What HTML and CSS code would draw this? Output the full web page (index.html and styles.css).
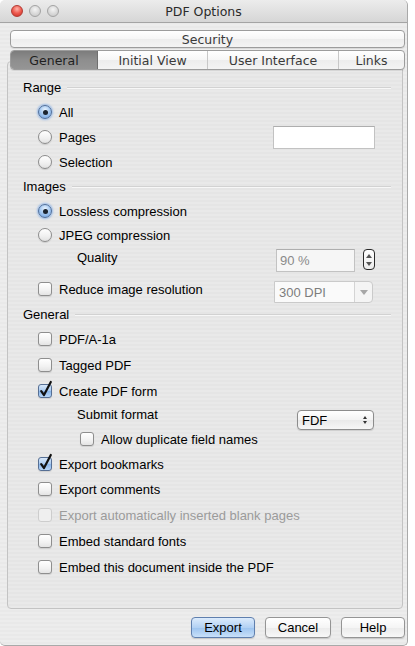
FILE: index.html
```html
<!DOCTYPE html>
<html>
<head>
<meta charset="utf-8">
<title>PDF Options</title>
<link rel="stylesheet" href="styles.css">
</head>
<body>
<div class="window">
  <div class="titlebar">
    <div class="lights"><span class="light red"></span><span class="light"></span><span class="light"></span></div>
    <div class="title">PDF Options</div>
    <div></div>
  </div>
  <div class="tabs">
    <div class="seg seg-single">Security</div>
    <div class="seg seg-multi">
      <span class="tab active w1">General</span>
      <span class="tab w2">Initial View</span>
      <span class="tab w3 div">User Interface</span>
      <span class="tab w4 div">Links</span>
    </div>
  </div>
  <div class="panel">
    <div class="row section h24"><span>Range</span><i class="rule"></i></div>
    <div class="row opt h26"><span class="radio on"></span><span class="lbl">All</span></div>
    <div class="row opt h24"><span class="radio"></span><span class="lbl">Pages</span><span class="field pages"></span></div>
    <div class="row opt h26"><span class="radio"></span><span class="lbl">Selection</span></div>
    <div class="row section h22"><span>Images</span><i class="rule"></i></div>
    <div class="row opt h28"><span class="radio on"></span><span class="lbl">Lossless compression</span></div>
    <div class="row opt h20"><span class="radio"></span><span class="lbl">JPEG compression</span></div>
    <div class="row sub h24"><span class="lbl">Quality</span><span class="field quality">90 %</span><span class="stepper"><i class="up"></i><i class="down"></i></span></div>
    <div class="row opt h24 gap8"><span class="check"></span><span class="lbl">Reduce image resolution</span><span class="dropdown"><span class="dd-text">300 DPI</span><span class="dd-arrow"></span></span></div>
    <div class="row section h26"><span>General</span><i class="rule"></i></div>
    <div class="row opt h24"><span class="check"></span><span class="lbl">PDF/A-1a</span></div>
    <div class="row opt h28"><span class="check"></span><span class="lbl">Tagged PDF</span></div>
    <div class="row opt h24"><span class="check on"><svg viewBox="0 0 14 14" width="14" height="14"><path d="M3.2 7.2 L6 11 L12.8 -2" fill="none" stroke="#111" stroke-width="2.2" stroke-linecap="round" stroke-linejoin="round"/></svg></span><span class="lbl">Create PDF form</span></div>
    <div class="row sub h23"><span class="lbl">Submit format</span><span class="select"><span>FDF</span><span class="sel-arrows"><i class="up"></i><i class="down"></i></span></span></div>
    <div class="row nested h26"><span class="check"></span><span class="lbl">Allow duplicate field names</span></div>
    <div class="row opt h24"><span class="check on"><svg viewBox="0 0 14 14" width="14" height="14"><path d="M3.2 7.2 L6 11 L12.8 -2" fill="none" stroke="#111" stroke-width="2.2" stroke-linecap="round" stroke-linejoin="round"/></svg></span><span class="lbl">Export bookmarks</span></div>
    <div class="row opt h26"><span class="check"></span><span class="lbl">Export comments</span></div>
    <div class="row opt h26 disabled"><span class="check"></span><span class="lbl">Export automatically inserted blank pages</span></div>
    <div class="row opt h26"><span class="check"></span><span class="lbl">Embed standard fonts</span></div>
    <div class="row opt h26"><span class="check"></span><span class="lbl">Embed this document inside the PDF</span></div>
  </div>
  <div class="buttons">
    <span class="btn default">Export</span>
    <span class="btn wide">Cancel</span>
    <span class="btn">Help</span>
  </div>
</div>
</body>
</html>
```
FILE: styles.css
```css
html, body {
  margin: 0;
  padding: 0;
}
body {
  background: #ffffff;
  width: 415px;
  height: 646px;
  overflow: hidden;
  font-family: "Liberation Sans", Arial, sans-serif;
  font-size: 13px;
  color: #000;
}
.window {
  width: 407px;
  height: 645px;
  border: 1px solid #a9a9a9;
  border-top: none;
  border-left: none;
  border-radius: 5px 5px 5px 5px;
  display: flex;
  flex-direction: column;
  background: repeating-linear-gradient(to bottom, #ededed 0, #ededed 2px, #e9e9e9 2px, #e9e9e9 4px);
  overflow: hidden;
}
.titlebar {
  height: 22px;
  flex: none;
  display: grid;
  grid-template-columns: 1fr auto 1fr;
  align-items: center;
  background: linear-gradient(to bottom, #ececec, #d6d6d6);
  border-bottom: 1px solid #a4a4a4;
  border-radius: 5px 5px 0 0;
}
.lights {
  display: flex;
  gap: 6px;
  padding-left: 11px;
  align-items: center;
}
.light {
  width: 12px;
  height: 12px;
  border-radius: 50%;
  box-sizing: border-box;
  border: 1px solid #a3a3a3;
  background: radial-gradient(circle at 50% 35%, #f4f4f4 0, #d8d8d8 55%, #c4c4c4 100%);
}
.light.red {
  border-color: #b23a33;
  background: radial-gradient(circle at 50% 30%, #ffb3a9 0, #ee5a4f 50%, #c62e24 100%);
}
.title {
  font-family: "DejaVu Sans", sans-serif;
  font-size: 12.5px;
  color: #2a2a2a;
}
.tabs {
  position: relative;
  z-index: 1;
  margin: 7px 2px 0 10px;
  display: flex;
  flex-direction: column;
  gap: 2px;
  font-family: "DejaVu Sans", sans-serif;
  font-size: 12.5px;
  color: #3a3a3a;
}
.seg {
  height: 18px;
  box-sizing: border-box;
  border: 1px solid #9c9c9c;
  border-radius: 4px;
  background: linear-gradient(to bottom, #ffffff, #f6f6f6 50%, #ededed 51%, #f4f4f4);
  box-shadow: 0 1px 0 rgba(0,0,0,0.08);
}
.seg-single {
  display: flex;
  align-items: center;
  justify-content: center;
}
.seg-multi {
  height: 20px;
  display: flex;
  overflow: hidden;
  line-height: 17px;
}
.tab {
  display: flex;
  align-items: center;
  justify-content: center;
}
.tab.div {
  border-left: 1px solid #c8c8c8;
}
.w1 { width: 86px; }
.w2 { width: 109px; }
.w3 { width: 130px; }
.w4 { flex: 1; }
.tab.active {
  background: linear-gradient(to bottom, #7c7c7c, #8e8e8e 50%, #959595);
  color: #1f1f1f;
  border-right: 1px solid #6f6f6f;
}
.panel {
  margin: -9px 4px 0 7px;
  flex: 1;
  border: 1px solid #c3c3c3;
  border-radius: 4px;
  background: repeating-linear-gradient(to bottom, #e9e9e9 0, #e9e9e9 2px, #e5e5e5 2px, #e5e5e5 4px);
  padding: 13px 11px 0 15px;
  display: flex;
  flex-direction: column;
}
.row {
  display: flex;
  align-items: center;
  flex: none;
}
.h20 { height: 20px; }
.h22 { height: 22px; }
.h23 { height: 23px; }
.h24 { height: 24px; }
.h26 { height: 26px; }
.h28 { height: 28px; }
.gap8 { margin-top: 8px; }
.section .rule {
  flex: 1;
  height: 0;
  margin-left: 6px;
  margin-top: 2px;
  border-top: 1px solid #d2d2d2;
  border-bottom: 1px solid #f7f7f7;
}
.opt { padding-left: 15px; }
.sub { padding-left: 54px; }
.nested { padding-left: 57px; }
.lbl { margin-left: 7px; white-space: nowrap; }
.sub .lbl { margin-left: 0; }
.radio {
  width: 14px;
  height: 14px;
  box-sizing: border-box;
  border-radius: 50%;
  border: 1px solid #8c8c8c;
  background: linear-gradient(to bottom, #ffffff, #f0f0f0 60%, #e2e2e2);
  box-shadow: 0 1px 1px rgba(0,0,0,0.12);
  display: flex;
  align-items: center;
  justify-content: center;
  flex: none;
}
.radio.on {
  border-color: #4f6f9c;
  background: radial-gradient(circle at 50% 30%, #e7f2fd 0, #a9cbf2 45%, #6c9fdf 100%);
  box-shadow: 0 0 2px 1px rgba(90,150,230,0.55);
}
.radio.on::after {
  content: "";
  width: 5px;
  height: 5px;
  border-radius: 50%;
  background: #1b2430;
}
.check {
  width: 14px;
  height: 14px;
  box-sizing: border-box;
  border-radius: 3px;
  border: 1px solid #8e8e8e;
  background: linear-gradient(to bottom, #ffffff, #f2f2f2 60%, #e4e4e4);
  box-shadow: 0 1px 1px rgba(0,0,0,0.1);
  flex: none;
  position: relative;
}
.check svg {
  position: absolute;
  left: -1px;
  top: -1px;
  overflow: visible;
}
.check.on {
  border-color: #566f94;
  background: linear-gradient(to bottom, #d8e8fa, #a8c9ef 50%, #89b5ea 51%, #b7d5f6);
}
.disabled .check {
  border-color: #cdcdcd;
  background: #efefef;
  box-shadow: none;
}
.disabled .lbl { color: #9b9b9b; }
.field {
  box-sizing: border-box;
  background: #ffffff;
  border: 1px solid #c2c2c2;
  border-top-color: #aeaeae;
  height: 23px;
  flex: none;
}
.field.pages {
  width: 102px;
  margin-left: auto;
  margin-right: 16px;
}
.field.quality {
  width: 79px;
  margin-left: auto;
  margin-top: 7px;
  color: #8a8a8a;
  padding-left: 3px;
  display: flex;
  align-items: center;
  background: #f6f6f6;
}
.stepper {
  width: 12px;
  height: 21px;
  box-sizing: border-box;
  margin-left: 8px;
  margin-right: 16px;
  margin-top: 5px;
  border: 1px solid #2a2a2a;
  border-radius: 4px;
  background: linear-gradient(to bottom, #ffffff, #ececec);
  display: flex;
  flex-direction: column;
  align-items: center;
  justify-content: center;
  gap: 4px;
  flex: none;
}
.up, .down {
  width: 0;
  height: 0;
  border-left: 3px solid transparent;
  border-right: 3px solid transparent;
  display: block;
}
.up { border-bottom: 4px solid #555; }
.down { border-top: 4px solid #555; }
.dropdown {
  margin-left: auto;
  margin-right: 18px;
  margin-top: 6px;
  width: 99px;
  height: 22px;
  box-sizing: border-box;
  border: 1px solid #cacaca;
  border-radius: 0 4px 4px 0;
  background: #f4f4f4;
  display: flex;
  flex: none;
}
.dd-text {
  flex: 1;
  color: #7d7d7d;
  padding-left: 4px;
  display: flex;
  align-items: center;
  border-right: 1px solid #d4d4d4;
  background: #fafafa;
}
.dd-arrow {
  width: 17px;
  display: flex;
  align-items: center;
  justify-content: center;
}
.dd-arrow::after {
  content: "";
  border-left: 4px solid transparent;
  border-right: 4px solid transparent;
  border-top: 5px solid #a6a6a6;
}
.select {
  margin-left: auto;
  margin-right: 17px;
  margin-top: 11px;
  width: 77px;
  height: 20px;
  box-sizing: border-box;
  border: 1px solid #8c8c8c;
  border-radius: 4px;
  background: linear-gradient(to bottom, #ffffff, #f3f3f3 50%, #e9e9e9 51%, #f6f6f6);
  box-shadow: 0 1px 1px rgba(0,0,0,0.12);
  display: flex;
  align-items: center;
  justify-content: space-between;
  padding: 0 6px 0 4px;
  flex: none;
}
.sel-arrows {
  display: flex;
  flex-direction: column;
  gap: 2px;
}
.sel-arrows .up { border-bottom-color: #333; border-left-width: 2.5px; border-right-width: 2.5px; border-bottom-width: 3px; }
.sel-arrows .down { border-top-color: #333; border-left-width: 2.5px; border-right-width: 2.5px; border-top-width: 3px; }
.buttons {
  flex: none;
  height: 21px;
  margin: 8px 2px 7px 0;
  display: flex;
  justify-content: flex-end;
  gap: 10px;
}
.btn {
  width: 64px;
  height: 21px;
  box-sizing: border-box;
  border: 1px solid #959595;
  border-radius: 4px;
  background: linear-gradient(to bottom, #ffffff, #f5f5f5 50%, #ebebeb 51%, #f8f8f8);
  box-shadow: 0 1px 1px rgba(0,0,0,0.15);
  display: flex;
  align-items: center;
  justify-content: center;
}
.btn.wide { width: 66px; }
.btn.default {
  border-color: #5f7fae;
  background: linear-gradient(to bottom, #dcebfc, #b2d1f4 50%, #9cc3ef 51%, #c8e0f9);
}
```
